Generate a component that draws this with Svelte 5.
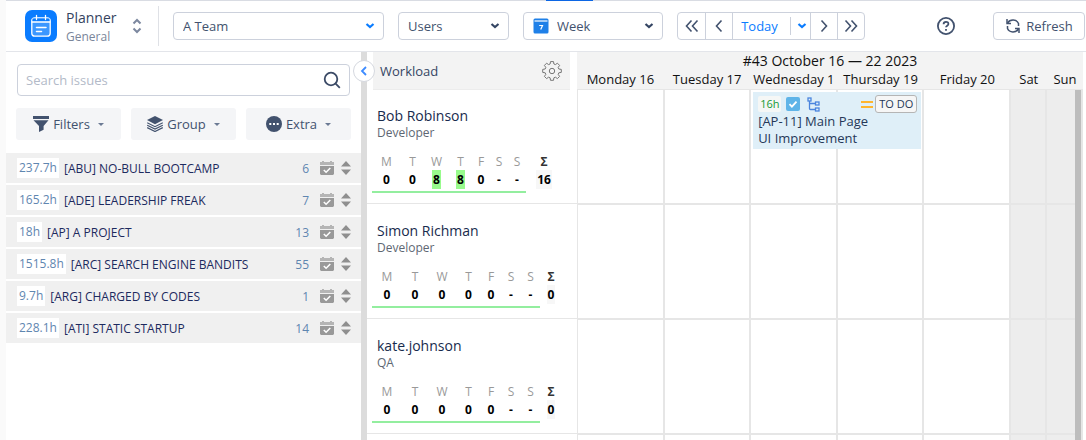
<script lang="ts">
	interface Project {
		hours: string;
		name: string;
		count: number;
	}

	interface Person {
		name: string;
		role: string;
		load: string[];
		total: string;
		cols: number[];
	}

	const projects: Project[] = [
		{ hours: '237.7h', name: '[ABU] NO-BULL BOOTCAMP', count: 6 },
		{ hours: '165.2h', name: '[ADE] LEADERSHIP FREAK', count: 7 },
		{ hours: '18h', name: '[AP] A PROJECT', count: 13 },
		{ hours: '1515.8h', name: '[ARC] SEARCH ENGINE BANDITS', count: 55 },
		{ hours: '9.7h', name: '[ARG] CHARGED BY CODES', count: 1 },
		{ hours: '228.1h', name: '[ATI] STATIC STARTUP', count: 14 }
	];

	// a two-digit total takes width from the day columns
	const wide = [30, 26, 28, 25, 20, 20, 19, 22];
	const tight = [29, 23, 25, 23, 18, 18, 18, 36];

	const people: Person[] = [
		{
			name: 'Bob Robinson',
			role: 'Developer',
			load: ['0', '0', '8', '8', '0', '-', '-'],
			total: '16',
			cols: tight
		},
		{
			name: 'Simon Richman',
			role: 'Developer',
			load: ['0', '0', '0', '0', '0', '-', '-'],
			total: '0',
			cols: wide
		},
		{
			name: 'kate.johnson',
			role: 'QA',
			load: ['0', '0', '0', '0', '0', '-', '-'],
			total: '0',
			cols: wide
		}
	];

	const letters = ['M', 'T', 'W', 'T', 'F', 'S', 'S'];
	const days = ['Monday 16', 'Tuesday 17', 'Wednesday 1', 'Thursday 19', 'Friday 20', 'Sat', 'Sun'];

	let search = $state('');
	let collapsed = $state(false);
</script>

{#snippet chevron()}
	<svg class="chevron" width="10" height="8" viewBox="0 0 10 8" aria-hidden="true">
		<path d="M1.5 2l3.5 3 3.5-3" fill="none" stroke="currentColor" stroke-width="2.2" />
	</svg>
{/snippet}

<div class="app">
	<header class="toolbar">
		<span class="active-tab"></span>
		<svg class="logo" width="32" height="32" viewBox="0 0 32 32" aria-hidden="true">
			<rect width="32" height="32" rx="7" fill="#0a7cff" />
			<rect x="6.8" y="7.8" width="18.4" height="18.4" rx="3" fill="#3b97ff" stroke="#fff" stroke-width="1.3" />
			<path d="M7.5 8.5h17v3h-17z" fill="#0a7cff" />
			<path d="M7 12h18M11.5 5.5v4M20.5 5.5v4" stroke="#fff" stroke-width="1.3" stroke-linecap="round" />
			<path d="M11.5 17.5h9.5M11.5 21.5h5" stroke="#fff" stroke-width="1.5" stroke-linecap="round" />
		</svg>
		<div class="titles">
			<h1>Planner</h1>
			<p>General</p>
		</div>
		<button type="button" class="switch" aria-label="Switch module">
			<svg width="10" height="16" viewBox="0 0 10 16">
				<path d="M1.5 5.5L5 2l3.5 3.5M1.5 10.5L5 14l3.5-3.5" fill="none" stroke="currentColor" stroke-width="2" />
			</svg>
		</button>
		<span class="rule"></span>

		<label class="select team">
			<select aria-label="Team"><option>A Team</option></select>
			{@render chevron()}
		</label>
		<label class="select users">
			<select aria-label="Group by"><option>Users</option></select>
			{@render chevron()}
		</label>
		<label class="select week">
			<svg class="lead" width="16" height="16" viewBox="0 0 16 16" aria-hidden="true">
				<rect x="0.5" y="0.5" width="15" height="15" rx="1.5" fill="#1f80e8" />
				<path d="M1.5 3h13" stroke="#fff" stroke-width="1.2" />
				<path d="M6.2 7.5h3.3l-1.8 4" fill="none" stroke="#fff" stroke-width="1.2" />
			</svg>
			<select aria-label="Period"><option>Week</option></select>
			{@render chevron()}
		</label>

		<div class="pager">
			<button type="button" aria-label="Back two">
				<svg width="14" height="14" viewBox="0 0 14 14"><path d="M6.5 1.5L1.5 7l5 5.5M12.5 1.5L7.5 7l5 5.5" /></svg>
			</button>
			<button type="button" aria-label="Back">
				<svg width="14" height="14" viewBox="0 0 14 14"><path d="M9.5 1.5L4.5 7l5 5.5" /></svg>
			</button>
			<button type="button" class="today">Today</button>
			<button type="button" class="today-menu" aria-label="Pick a date">{@render chevron()}</button>
			<button type="button" aria-label="Forward">
				<svg width="14" height="14" viewBox="0 0 14 14"><path d="M4.5 1.5l5 5.5-5 5.5" /></svg>
			</button>
			<button type="button" aria-label="Forward two">
				<svg width="14" height="14" viewBox="0 0 14 14"><path d="M1.5 1.5l5 5.5-5 5.5M7.5 1.5l5 5.5-5 5.5" /></svg>
			</button>
		</div>

		<button type="button" class="help" aria-label="Help">
			<svg width="20" height="20" viewBox="0 0 20 20" fill="none" stroke="currentColor" stroke-width="1.8">
				<circle cx="10" cy="10" r="8.1" />
				<path d="M7.6 8.2c0-3.1 4.8-3.1 4.8-.3 0 1.7-2.4 1.8-2.4 3.4" />
				<path d="M10 13v1.8" />
			</svg>
		</button>
		<button type="button" class="refresh">
			<svg width="16" height="16" viewBox="0 0 16 16" fill="none" stroke="currentColor" stroke-width="1.5">
				<path d="M2.6 5C5 1 11.500 1 13.500 5.500V8M13.400 11C11 15 4.500 15 2.500 10.500V8" />
				<path d="M2 1v4.500h4M14 15v-4.500h-4" />
			</svg>
			Refresh
		</button>
	</header>

	<main class:collapsed>
		<aside>
			<div class="search">
				<input type="text" aria-label="Search issues" placeholder="Search issues" bind:value={search} />
				<svg width="18" height="18" viewBox="0 0 18 18" fill="none" stroke="#3b4a66" stroke-width="1.8" aria-hidden="true">
					<circle cx="8" cy="8" r="6.3" />
					<path d="M12.4 12.4l4.4 4.4" />
				</svg>
			</div>
			<div class="actions">
				<button type="button">
					<svg width="16" height="16" viewBox="0 0 16 16" fill="currentColor">
						<path d="M0 0h16v3H0z" />
						<path d="M.5 4.2h15L10.6 10v3.8L6 16v-6z" />
					</svg>
					Filters<i></i>
				</button>
				<button type="button">
					<svg width="16" height="16" viewBox="0 0 16 16">
						<path d="M8 0l8 4-8 4.2L0 4z" fill="currentColor" />
						<path d="M.2 6.8L8 10.7l7.8-3.9M.2 9.2L8 13.1l7.8-3.9M.2 11.6L8 15.5l7.8-3.9" fill="none" stroke="currentColor" stroke-width="1.2" />
					</svg>
					Group<i></i>
				</button>
				<button type="button">
					<svg width="16" height="16" viewBox="0 0 16 16">
						<circle cx="8" cy="8" r="8" fill="currentColor" />
						<path d="M3.3 7h2v2h-2zM7 7h2v2H7zM10.7 7h2v2h-2z" fill="#fff" />
					</svg>
					Extra<i></i>
				</button>
			</div>
			<ul>
				{#each projects as p (p.name)}
					<li>
						<span class="hours">{p.hours}</span>
						<span class="name">{p.name}</span>
						<span class="count">{p.count}</span>
						<svg width="14" height="14" viewBox="0 0 14 14" aria-hidden="true">
							<path d="M0 1h2V0h2v1h6V0h2v1h2v3H0z" fill="#b5b5b5" />
							<path d="M0 5h14v8l-1 1H1l-1-1z" fill="#999" />
							<path d="M3.8 9l2.3 2.3 4.2-4.4" fill="none" stroke="#fff" stroke-width="1.5" />
						</svg>
						<svg width="10" height="14" viewBox="0 0 10 14" fill="#8f8f8f" aria-hidden="true">
							<path d="M5 0l5 5.5H0zM5 14l5-5.500H0z" />
						</svg>
					</li>
				{/each}
			</ul>
		</aside>

		<div class="splitter">
			<button type="button" aria-label="Toggle issue list" onclick={() => (collapsed = !collapsed)}>
				<svg width="8" height="10" viewBox="0 0 8 10">
					<path d="M6 1L2 5l4 4" fill="none" stroke="#3d8bff" stroke-width="1.8" />
				</svg>
			</button>
		</div>

		<section class="board">
			<div class="row head">
				<div class="workload-head">
					<span>Workload</span>
					<button type="button" aria-label="Workload settings">
						<svg width="20" height="20" viewBox="0 0 20 20" fill="none" stroke="#777">
							<path d="M8.500.6h3l.4 2.400 1.500.6 2-1.400 2.200 2.200-1.400 2 .6 1.600 2.500.4v3l-2.500.4-.6 1.600 1.400 2-2.200 2.200-2-1.400-1.500.6-.4 2.500h-3l-.4-2.500-1.500-.6-2 1.400-2.200-2.200 1.400-2-.6-1.600L.7 11.400v-3l2.500-.4.6-1.600-1.400-2 2.200-2.200 2 1.400 1.500-.6z" />
							<circle cx="10" cy="10" r="2.7" />
						</svg>
					</button>
				</div>
				<div class="calendar-head">
					<h2>#43 October 16 — 22 2023</h2>
					<div class="days">
						{#each days as day}
							<span>{day}</span>
						{/each}
					</div>
				</div>
			</div>

			<div class="rows">
				{#each people as person, i (person.name)}
					<div class="row">
						<div class="person">
							<h3>{person.name}</h3>
							<p>{person.role}</p>
							<table>
								<colgroup>
									{#each person.cols as w}
										<col style="width: {w}px" />
									{/each}
								</colgroup>
								<thead>
									<tr>
										{#each letters as l}
											<th>{l}</th>
										{/each}
										<th class="sum">Σ</th>
									</tr>
								</thead>
								<tbody>
									<tr>
										{#each person.load as hours}
											<td><span class:busy={Number(hours) > 0}>{hours}</span></td>
										{/each}
										<td class="total"><span>{person.total}</span></td>
									</tr>
								</tbody>
							</table>
						</div>
						<div class="days cells">
							{#each days as _, d}
								<div class="cell" class:weekend={d > 4} style="grid-column: {d + 1}"></div>
							{/each}
							{#if i === 0}
								<article class="task">
									<div class="meta">
										<span class="estimate">16h</span>
										<svg width="14" height="14" viewBox="0 0 14 14" aria-hidden="true">
											<rect width="14" height="14" rx="2" fill="#5fb4e8" />
											<path d="M3.5 7.2l2.400 2.400 4.600-5" fill="none" stroke="#fff" stroke-width="1.8" />
										</svg>
										<svg width="13" height="15" viewBox="0 0 13 15" fill="none" stroke="#4a84dd" stroke-width="1.3" aria-hidden="true">
											<rect x="1" y="1" width="3" height="3" />
											<rect x="8.5" y="5" width="3.5" height="3" />
											<rect x="8.5" y="11" width="3.5" height="3" />
											<path d="M2.5 4v7.500q0 1 1 1h5M2.500 6.500h6" />
										</svg>
										<svg class="priority" width="12" height="9" viewBox="0 0 12 9" aria-hidden="true">
											<path d="M0 2h12M0 7h12" stroke="#ffb52e" stroke-width="2" />
										</svg>
										<span class="status">TO DO</span>
									</div>
									<p>[AP-11] Main Page<br />UI Improvement</p>
								</article>
							{/if}
						</div>
					</div>
				{/each}
				<div class="row rest">
					<div class="person"></div>
					<div class="days cells">
						{#each days as _, d}
							<div class="cell" class:weekend={d > 4}></div>
						{/each}
					</div>
				</div>
				<span class="thumb"></span>
			</div>
		</section>
	</main>
</div>

<style>
	:global(body) {
		margin: 0;
		background: #fff;
	}

	.app {
		display: flex;
		flex-direction: column;
		height: 100vh;
		box-sizing: border-box;
		overflow: hidden;
		border-left: 6px solid #fafafa;
		font-family: 'Open Sans', 'Noto Sans', sans-serif;
		font-size: 13px;
		color: #253858;
	}

	.app :global(*) {
		box-sizing: border-box;
	}

	h1,
	h2,
	h3,
	p,
	ul {
		margin: 0;
		padding: 0;
		font-weight: 400;
	}

	button,
	select,
	input {
		margin: 0;
		padding: 0;
		border: 0;
		background: none;
		font: inherit;
		color: #42526e;
	}

	svg {
		flex: none;
		display: block;
	}

	.toolbar {
		position: relative;
		flex: none;
		display: flex;
		align-items: center;
		height: 52px;
		padding: 0 1px 0 19px;
		border-top: 1px solid #d9dce3;
		border-bottom: 1px solid #e3e5ea;
	}

	.active-tab {
		position: absolute;
		top: -1px;
		left: 50%;
		width: 47px;
		height: 1px;
		background: #0c66e4;
	}

	.titles {
		flex: none;
		width: 66px;
		margin-left: 9px;
	}

	h1 {
		font-size: 14px;
		line-height: 20px;
		color: #34435e;
	}

	.titles p {
		font-size: 12px;
		line-height: 17px;
		color: #7a869a;
	}

	.switch {
		flex: none;
		width: 26px;
		color: #7c889f;
	}

	.rule {
		flex: none;
		width: 1px;
		height: 40px;
		margin-right: 14px;
		background: #dfe1e6;
	}

	.select {
		flex: none;
		display: flex;
		align-items: center;
		height: 28px;
		padding-right: 8px;
		border: 1px solid #ccd1dc;
		border-radius: 4px;
		margin-right: 14px;
	}

	.select select {
		flex: 1;
		min-width: 0;
		height: 26px;
		padding-left: 9px;
		appearance: none;
	}

	.team {
		width: 211px;
	}

	.team .chevron {
		color: #0a7cff;
	}

	.users {
		width: 111px;
	}

	.week {
		width: 140px;
	}

	.lead {
		margin-left: 9px;
	}

	.week select {
		padding-left: 8px;
	}

	.chevron {
		color: #344563;
	}

	.pager {
		display: flex;
		height: 28px;
		border: 1px solid #ccd1dc;
		border-radius: 4px;
	}

	.pager button {
		display: flex;
		align-items: center;
		justify-content: center;
		width: 27px;
		border-left: 1px solid #ccd1dc;
	}

	.pager button:first-child {
		border-left: 0;
	}

	.pager svg:not(.chevron) {
		fill: none;
		stroke: #42526e;
		stroke-width: 1.6;
	}

	.pager .today {
		width: 54px;
		color: #0a7cff;
	}

	.pager .today-menu {
		width: 24px;
		border-left: 0;
	}

	.today-menu::before {
		content: '';
		width: 1px;
		height: 18px;
		margin-right: 6px;
		background: #ccd1dc;
	}

	.today-menu .chevron {
		color: #0a7cff;
	}

	.help {
		margin-left: auto;
		margin-right: 37px;
		color: #42526e;
	}

	.refresh {
		display: flex;
		align-items: center;
		justify-content: center;
		gap: 5px;
		width: 92px;
		height: 28px;
		border: 1px solid #ccd1dc;
		border-radius: 4px;
	}

	main {
		flex: 1;
		min-height: 0;
		display: grid;
		grid-template-columns: 355px 6px minmax(0, 1fr);
	}

	main.collapsed {
		grid-template-columns: 0 6px minmax(0, 1fr);
	}

	aside {
		overflow: hidden;
	}

	.search {
		display: flex;
		align-items: center;
		height: 32px;
		margin: 12px 11px;
		padding: 0 8px;
		border: 1px solid #ccd1dc;
		border-radius: 4px;
	}

	.search input {
		flex: 1;
		min-width: 0;
		outline: 0;
	}

	.search input::placeholder {
		color: #b3bac8;
		opacity: 1;
	}

	.actions {
		display: flex;
		gap: 10px;
		margin: 0 10px 13px;
	}

	.actions button {
		flex: 1;
		display: flex;
		align-items: center;
		justify-content: center;
		gap: 4px;
		height: 32px;
		border-radius: 3px;
		background: #f4f5f7;
	}

	.actions i {
		margin-left: 4px;
		border: 3px solid transparent;
		border-top-color: #6b7a94;
		border-bottom: 0;
	}

	ul {
		list-style: none;
	}

	li {
		display: flex;
		align-items: center;
		height: 30px;
		margin-bottom: 2px;
		padding: 0 10px 0 11px;
		background: #f0f0f0;
		font-size: 12px;
	}

	.hours {
		padding: 0 2px;
		line-height: 20px;
		background: #fff;
		color: #5f86b0;
	}

	.name {
		flex: 1;
		margin-left: 5px;
		white-space: nowrap;
		color: #1d2a5e;
	}

	.count {
		color: #5f86b0;
	}

	li svg {
		margin-left: 11px;
	}

	li svg + svg {
		margin-left: 7px;
	}

	.splitter {
		position: relative;
		background: #dcdcdc;
	}

	.splitter button {
		position: absolute;
		z-index: 2;
		top: 8px;
		left: -8px;
		display: grid;
		place-items: center;
		width: 22px;
		height: 22px;
		border: 1px solid #d5d8df;
		border-radius: 50%;
		background: #fff;
	}

	.board {
		display: flex;
		flex-direction: column;
		min-height: 0;
		padding-right: 3px;
	}

	.row {
		flex: none;
		display: grid;
		grid-template-columns: 210px minmax(0, 1fr);
		min-height: 115px;
	}

	.head {
		min-height: 38px;
	}

	.workload-head {
		display: flex;
		align-items: center;
		justify-content: space-between;
		height: 38px;
		margin: 0 7px 0 6px;
		padding: 0 8px 0 7px;
		border-bottom: 1px solid #ececec;
		background: #f3f3f3;
		color: #344563;
	}

	.calendar-head {
		border-bottom: 1px solid #e6e6e6;
		background: #f3f3f3;
		color: #111;
		text-align: center;
	}

	h2 {
		font-size: 14px;
		line-height: 18px;
	}

	.days {
		display: grid;
		grid-template-columns: repeat(5, minmax(0, 12fr)) repeat(2, minmax(0, 5fr));
	}

	.days > span {
		overflow: hidden;
		white-space: nowrap;
		line-height: 18px;
	}

	.rows {
		position: relative;
		flex: 1;
		display: flex;
		flex-direction: column;
		min-height: 0;
		overflow: hidden;
	}

	.person {
		margin-bottom: 1px;
		padding: 16px 5px 0;
		border-bottom: 1px solid #e6e6e6;
	}

	h3 {
		padding-left: 5px;
		font-size: 14px;
		line-height: 20px;
		color: #172b4d;
	}

	.person p {
		padding-left: 5px;
		font-size: 12px;
		line-height: 14px;
		color: #5e6773;
	}

	table {
		width: 190px;
		margin-top: 14px;
		border-collapse: collapse;
		table-layout: fixed;
		text-align: center;
		font-size: 12px;
	}

	th {
		padding: 0;
		font-weight: 400;
		line-height: 16px;
		color: #999;
	}

	.sum {
		font-weight: 700;
		color: #333;
	}

	td {
		padding: 0 0 2px;
		border-bottom: 2px solid #93ee9f;
		font-weight: 700;
		color: #000;
	}

	td span {
		display: inline-block;
		padding: 1px 1px 0;
		line-height: 18px;
		vertical-align: top;
	}

	.busy {
		background: #98fb8c;
	}

	.total {
		border-bottom-color: transparent;
	}

	.total span {
		background: #f7f7f7;
	}

	.cells {
		border-left: 1px solid #e6e6e6;
	}

	.cell {
		grid-row: 1;
		border-right: 2px solid #e6e6e6;
		border-bottom: 2px solid #e6e6e6;
	}

	.weekend {
		background: #ededed;
	}

	.rest {
		flex: 1;
	}

	.task {
		grid-area: 1 / 3 / 2 / 5;
		z-index: 1;
		align-self: start;
		margin: 2px 3px 0 2px;
		padding: 3px 4px 2px 5px;
		background: #dfeff8;
	}

	.meta {
		display: flex;
		align-items: center;
		gap: 5px;
		height: 18px;
	}

	.meta svg + svg {
		margin-left: 2px;
	}

	.estimate {
		padding: 0 2px;
		border-radius: 2px;
		background: #f5f7f6;
		font-size: 11px;
		line-height: 16px;
		color: #159a35;
	}

	.meta .priority {
		margin-left: auto;
	}

	.priority + .status {
		margin-left: -3px;
	}

	.status {
		padding: 0 3px;
		border: 1px solid #b5b5b5;
		border-radius: 3px;
		background: #f6f6f6;
		font-size: 11px;
		line-height: 16px;
	}

	.task p {
		font-size: 13px;
		line-height: 17px;
	}

	.thumb {
		position: absolute;
		z-index: 2;
		top: 0;
		bottom: 0;
		right: 2px;
		width: 6px;
		background: #bdbdbd;
	}
</style>
